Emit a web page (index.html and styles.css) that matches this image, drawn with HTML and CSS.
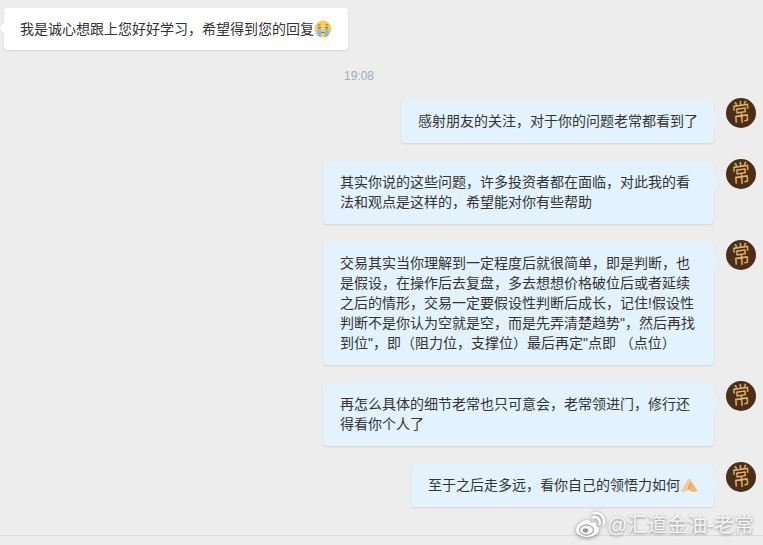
FILE: index.html
```html
<!DOCTYPE html>
<html lang="zh">
<head>
  <meta charset="UTF-8" />
  <title>汇道金油-老常</title>
  <link rel="stylesheet" href="styles.css">
</head>
<body>
  <div class="chat">
    <div class="row row-left">
      <div class="bubble bubble-left">我是诚心想跟上您好好学习，希望得到您的回复<svg class="emoji" viewBox="0 0 18 18"><circle cx="9" cy="9" r="8.5" fill="#f7cf5a"/><path d="M3.500 8h3.500v9.200c-1.800-.4-2.800-1-3.500-1.800zM11 8h3.500v7.400c-.7.8-1.700 1.400-3.500 1.800z" fill="#7dbcf0"/><path d="M3.500 5.500l3-1.200M14.500 5.500l-3-1.200M4 7.500h3M11 7.500h3" stroke="#9a6a28" stroke-width="1" fill="none"/><path d="M7 13q2-2 4 0" stroke="#9a6a28" stroke-width="1" fill="none"/></svg></div>
    </div>

    <div class="time">19:08</div>

    <div class="row">
      <div class="bubble">感射朋友的关注，对于你的问题老常都看到了</div>
      <div class="avatar"><span>常</span></div>
    </div>
    <div class="row">
      <div class="bubble">其实你说的这些问题，许多投资者都在面临，对此我的看法和观点是这样的，希望能对你有些帮助</div>
      <div class="avatar"><span>常</span></div>
    </div>
    <div class="row">
      <div class="bubble">交易其实当你理解到一定程度后就很简单，即是判断，也是假设，在操作后去复盘，多去想想价格破位后或者延续之后的情形，交易一定要假设性判断后成长，记住!假设性判断不是你认为空就是空，而是先弄清楚趋势"，然后再找到位"，即（阻力位，支撑位）最后再定"点即 （点位）</div>
      <div class="avatar"><span>常</span></div>
    </div>
    <div class="row">
      <div class="bubble">再怎么具体的细节老常也只可意会，老常领进门，修行还得看你个人了</div>
      <div class="avatar"><span>常</span></div>
    </div>
    <div class="row">
      <div class="bubble">至于之后走多远，看你自己的领悟力如何<svg class="emoji" viewBox="0 0 18 18"><path d="M0.500 15.500L8 3.500q1.500-1.500 2.500 0l2 3.500-5 7.500q-3 2-7 1z" fill="#f5cb98"/><path d="M10.500 6.500q2.500 0 3.500 3l3.500 5.500q-3.500 2-7 0l-2-2z" fill="#eeb67a"/><path d="M8 13.500l2.500-6.500" stroke="#c98d50" stroke-width="1" fill="none"/></svg></div>
      <div class="avatar"><span>常</span></div>
    </div>
  </div>
  <div class="footer"></div>

  <div class="watermark">
    <svg class="weibo" viewBox="0 0 30 26">
      <path d="M12 8C6 9 1 14 1 18c0 4 5.500 7 11 7 7 0 12-4 12-7.500 0-2-1.500-3-3-3.500 .8-2 .2-3.500-2-3.500-1.500 0-3 .6-3.500 .8 .4-2-.8-3.500-3.500-2.800z" fill="#fff"/>
      <ellipse cx="11.500" cy="18" rx="7" ry="5" fill="none" stroke="#aaa" stroke-width="1.400"/>
      <ellipse cx="10.500" cy="18.500" rx="2.800" ry="2.200" fill="#999"/>
      <path d="M18 5.500c4-1.500 8 2 6.500 6.500M18.500 1.500c7-2 12 4 10 11" fill="none" stroke="#fff" stroke-width="2" stroke-linecap="round"/>
    </svg>
    <span>@汇道金油-老常</span>
  </div>
</body>
</html>
```

FILE: styles.css
```css
* {
  box-sizing: border-box;
}
body {
  margin: 0;
  height: 545px;
  overflow: hidden;
  background: #ededed;
  color: #333;
  font-family: "Liberation Sans", "Noto Sans CJK SC", sans-serif;
  font-size: 14px;
  line-height: 20px;
  display: flex;
  flex-direction: column;
}
.chat {
  flex: 1;
  padding: 8px 7px 0 4px;
}
.footer {
  height: 10px;
  border-top: 1px solid #dcdcdc;
}
.row {
  display: flex;
  justify-content: flex-end;
  align-items: flex-start;
  gap: 12px;
  margin-bottom: 16.5px;
}
.row-left {
  justify-content: flex-start;
  margin-bottom: 0;
}
.bubble {
  position: relative;
  max-width: 391px;
  margin-top: 1.5px;
  padding: 11px 16px 12px 17px;
  background: #e3f2fd;
  border-radius: 4px;
  box-shadow: 0 1px 2px rgba(0,0,0,0.1);
}
.bubble::after {
  content: "";
  position: absolute;
  top: 13px;
  right: -7px;
  border-left: 7px solid #e3f2fd;
  border-top: 7px solid transparent;
  border-bottom: 7px solid transparent;
}
.bubble-left {
  max-width: none;
  margin-top: 0;
  padding: 11px 16px 11px 16px;
  background: #fff;
}
.bubble-left::after {
  right: auto;
  left: -4px;
  top: 14px;
  border-left: 0;
  border-right: 4px solid #fff;
  border-top: 6px solid transparent;
  border-bottom: 6px solid transparent;
}
.emoji {
  width: 18px;
  height: 18px;
  vertical-align: -4px;
}
.time {
  margin: 18px 0 14px;
  padding-right: 42px;
  text-align: center;
  color: #a8acb8;
  font-size: 12px;
  line-height: 16px;
}
.avatar {
  flex: none;
  width: 30px;
  height: 30px;
  border-radius: 50%;
  background: #4b2d18;
  color: #dcb46e;
  display: flex;
  align-items: center;
  justify-content: center;
  overflow: hidden;
}
.avatar span {
  font-size: 24px;
  line-height: 30px;
  transform: scaleX(0.75) rotate(-6deg);
}
.watermark {
  position: absolute;
  right: 9px;
  top: 511px;
  display: flex;
  align-items: center;
  gap: 2px;
  color: rgba(255,255,255,0.88);
  font-size: 20px;
  line-height: 28px;
  text-shadow: 0 1px 3px rgba(0,0,0,0.45);
}
.weibo {
  width: 30px;
  height: 26px;
  filter: drop-shadow(0 1px 2px rgba(0,0,0,0.45));
}
```
